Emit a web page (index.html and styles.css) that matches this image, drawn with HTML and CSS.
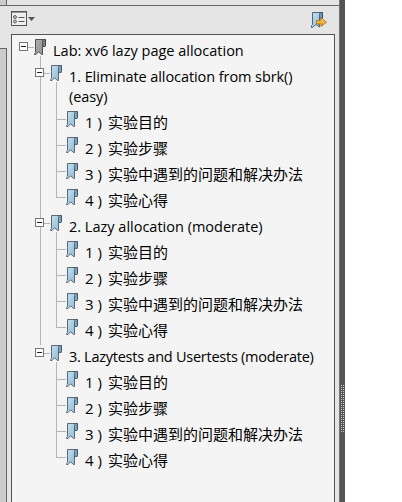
FILE: index.html
```
<!DOCTYPE html>
<html lang="zh-CN">
<head>
<meta charset="utf-8">
<title>Bookmarks</title>
<link rel="stylesheet" href="styles.css">
</head>
<body>
<svg class="defs" width="0" height="0">
  <defs>
    <linearGradient id="blue" x1="0" y1="0" x2="1" y2="1"><stop offset="0" stop-color="#c6e0f0"/><stop offset="1" stop-color="#8db8d5"/></linearGradient>
    <linearGradient id="gold" x1="0" y1="0" x2="0" y2="1"><stop offset="0" stop-color="#ffdf82"/><stop offset="1" stop-color="#dd8d0c"/></linearGradient>
    <symbol id="mark" viewBox="0 0 12 17">
      <path class="fold" d="M7.5.5h4v6.2q0 .8-.8.8H7.5z"/>
      <path class="ribbon" d="M1.5.5h8.500q-1.500.3-1.500 1.800v13.200H7.400L4.700 12.800l-2.700 2.700H.5v-1l1-1z"/>
    </symbol>
  </defs>
</svg>
<div class="window">
  <div class="rail"><div class="rail-top"></div><div class="rail-gap"></div><div class="rail-body"></div></div>
  <div class="side">
    <div class="head"></div>
    <div class="toolbar">
      <svg class="options" width="24" height="15" viewBox="0 0 24 15">
        <rect x=".5" y=".5" width="15" height="14" fill="#eee" stroke="#555"/>
        <path d="M1 1.5h14" stroke="#999"/>
        <circle cx="4" cy="6" r="1.500" fill="#bbb" stroke="#666"/><circle cx="4" cy="10.500" r="1.500" fill="#bbb" stroke="#666"/>
        <path d="M7.500 6.500h6M7.500 10.500h6" stroke="#555"/>
        <path d="M17 6h7l-3.500 4z" fill="#555"/>
      </svg>
      <svg class="goto" width="17" height="17" viewBox="0 0 17 17">
        <path d="M8 .5h3.500v6H8z" fill="#6f9db9" stroke="#34495b"/>
        <path d="M1.500.5h8.500q-1.500.3-1.500 2v12.500L4.700 12.500 1.500 15.500H.5v-2l1-1z" fill="url(#blue)" stroke="#4c657c"/>
        <path d="M5.500 8.500h4.500v-3l5.500 4.800-5.500 4.200v-2.500H5.500z" fill="url(#gold)" stroke="#a96f14" stroke-width=".8"/>
      </svg>
    </div>
    <div class="tree">
      <div class="row root"><i class="toggle"></i><i class="link"></i><svg class="mark gray"><use href="#mark"/></svg><span>Lab: xv6 lazy page allocation</span></div>
      <div class="sections">
        <section>
          <div class="row"><i class="toggle"></i><i class="link"></i><svg class="mark"><use href="#mark"/></svg><span class="t1">1. Eliminate allocation from sbrk()<br>(easy)</span></div>
          <div class="items">
            <div class="row"><i class="link"></i><svg class="mark"><use href="#mark"/></svg><span><b>1 )</b>实验目的</span></div>
            <div class="row"><i class="link"></i><svg class="mark"><use href="#mark"/></svg><span><b>2 )</b>实验步骤</span></div>
            <div class="row"><i class="link"></i><svg class="mark"><use href="#mark"/></svg><span><b>3 )</b>实验中遇到的问题和解决办法</span></div>
            <div class="row"><i class="link"></i><svg class="mark"><use href="#mark"/></svg><span><b>4 )</b>实验心得</span></div>
          </div>
        </section>
        <section>
          <div class="row"><i class="toggle"></i><i class="link"></i><svg class="mark"><use href="#mark"/></svg><span>2. Lazy allocation (moderate)</span></div>
          <div class="items">
            <div class="row"><i class="link"></i><svg class="mark"><use href="#mark"/></svg><span><b>1 )</b>实验目的</span></div>
            <div class="row"><i class="link"></i><svg class="mark"><use href="#mark"/></svg><span><b>2 )</b>实验步骤</span></div>
            <div class="row"><i class="link"></i><svg class="mark"><use href="#mark"/></svg><span><b>3 )</b>实验中遇到的问题和解决办法</span></div>
            <div class="row"><i class="link"></i><svg class="mark"><use href="#mark"/></svg><span><b>4 )</b>实验心得</span></div>
          </div>
        </section>
        <section>
          <div class="row"><i class="toggle"></i><i class="link"></i><svg class="mark"><use href="#mark"/></svg><span class="t3">3. Lazytests and Usertests (moderate)</span></div>
          <div class="items">
            <div class="row"><i class="link"></i><svg class="mark"><use href="#mark"/></svg><span><b>1 )</b>实验目的</span></div>
            <div class="row"><i class="link"></i><svg class="mark"><use href="#mark"/></svg><span><b>2 )</b>实验步骤</span></div>
            <div class="row"><i class="link"></i><svg class="mark"><use href="#mark"/></svg><span><b>3 )</b>实验中遇到的问题和解决办法</span></div>
            <div class="row"><i class="link"></i><svg class="mark"><use href="#mark"/></svg><span><b>4 )</b>实验心得</span></div>
          </div>
        </section>
      </div>
    </div>
  </div>
  <div class="splitter"><div class="grip"></div></div>
</div>
</body>
</html>
```
FILE: styles.css
```
* { box-sizing: border-box; }
body { margin: 0; background: #fff; overflow: hidden; font: 15px/20px "Open Sans", "Noto Sans CJK SC", sans-serif; color: #000; }
.defs { position: absolute; }
.window { display: flex; height: 502px; }
.rail { width: 7px; display: flex; flex-direction: column; background: #e5e5e5; }
.rail-top { height: 5px; background: #ccc; border-right: 1px solid #666; }
.rail-gap { height: 43px; border-top: 1px solid #666; }
.rail-body { flex: 1; background: #ccc; border: solid #666; border-width: 1px 1px 0 0; }
.side { width: 332px; display: flex; flex-direction: column; background: #e5e5e5; }
.head { height: 6px; border-bottom: 1px solid #666; }
.toolbar { height: 28px; display: flex; justify-content: space-between; align-items: flex-start; padding: 5px 11px 0 4px; }
.goto { margin-top: 1px; }
.tree { flex: 1; margin: 0 4px; padding: 4px 0 0 7px; border: 1px solid #555; border-bottom: 0; background: #f4f4f4; }
.row { display: flex; min-height: 26px; align-items: flex-start; white-space: nowrap; }
.root { background: linear-gradient(#b5b5b5, #b5b5b5) 21px 17px / 1px 9px no-repeat; }
.toggle { width: 9px; height: 9px; margin-top: 3px; flex: none; border: 1px solid #777; background: linear-gradient(#222, #222) center / 5px 1px no-repeat #fff; }
.link { height: 1px; width: 6px; margin-top: 8px; flex: none; background: #b5b5b5; }
.mark { width: 12px; height: 17px; flex: none; }
.ribbon { fill: url(#blue); stroke: #5a6872; }
.fold { fill: #7ba6bf; stroke: #44535e; }
.gray { filter: grayscale(1) brightness(.8); }
.row span { margin: 2px 0 0 7px; font-size: 14.500px; }
.row .t1 { letter-spacing: -.08px; }
.row .t3 { letter-spacing: -.25px; }
.sections { margin-left: 16px; }
.sections > section:not(:last-child) { background: linear-gradient(#b5b5b5, #b5b5b5) 5px 0 / 1px 100% no-repeat; }
section > .row { background: linear-gradient(#b5b5b5, #b5b5b5) 21px 17px / 1px 9px no-repeat; }
section:first-child > .row { min-height: 46px; background-size: 1px 29px; }
.items { margin-left: 21px; background: linear-gradient(#b5b5b5, #b5b5b5) 0 0 / 1px 87px no-repeat; }
.items .link { width: 10px; }
.items .row span { margin-top: 1px; font-size: 15px; }
.items b { display: inline-block; width: 23px; font-weight: 400; }
.splitter { width: 6px; padding: 385px 1px 0 2px; background: linear-gradient(90deg, #737373 1px, #555 1px); }
.grip { width: 3px; height: 47px; background: conic-gradient(#555 0 75%, #ccc 0) 0 0 / 2px 2px; }
```
